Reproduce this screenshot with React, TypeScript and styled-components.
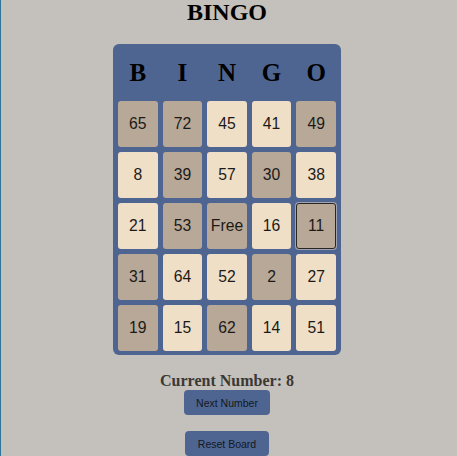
import React from "react";
import styled, { createGlobalStyle } from "styled-components";

const GlobalStyle = createGlobalStyle`
  html, body {
    margin: 0;
    padding: 0;
    background: #c4c0bb;
  }
`;

const Page = styled.div`
  box-sizing: border-box;
  width: 453px;
  min-height: 456px;
  border-left: 1px solid #2e7599;
  display: flex;
  flex-direction: column;
  align-items: center;
  overflow: hidden;
`;

const Title = styled.h1`
  margin: 0;
  font-family: "Liberation Serif", "Times New Roman", serif;
  font-weight: bold;
  font-size: 24px;
  line-height: 24px;
  color: #000;
`;

const Board = styled.div`
  margin-top: 20px;
  background: #4e6592;
  border-radius: 6px;
  padding: 5px 5px 4px;
  display: grid;
  grid-template-columns: repeat(5, 39.6px);
  grid-template-rows: 47px repeat(5, 46px);
  column-gap: 5px;
  row-gap: 5px;
`;

const Letter = styled.div`
  display: flex;
  align-items: center;
  justify-content: center;
  font-family: "Liberation Serif", "Times New Roman", serif;
  font-weight: bold;
  font-size: 25px;
  color: #000;
  padding-top: 1px;
`;

const Cell = styled.div<{ $called: boolean; $selected?: boolean }>`
  box-sizing: border-box;
  display: flex;
  align-items: center;
  justify-content: center;
  border-radius: 3px;
  background: ${(p) => (p.$called ? "#b8a897" : "#f0dfc7")};
  border: ${(p) => (p.$selected ? "1px solid #2a2622" : "none")};
  box-shadow: ${(p) => (p.$selected ? "0 0 0 1px rgba(210,205,200,0.6)" : "none")};
  font-family: "Liberation Sans", Arial, sans-serif;
  font-size: 15.7px;
  color: #1c1a18;
`;

const Current = styled.div`
  margin-top: 17px;
  font-family: "Liberation Serif", "Times New Roman", serif;
  font-weight: bold;
  font-size: 16px;
  line-height: 18px;
  color: #3a3835;
`;

const Button = styled.button<{ $gap?: number }>`
  margin-top: ${(p) => p.$gap ?? 0}px;
  height: 25px;
  padding: 0 12.5px;
  border: none;
  border-radius: 4px;
  background: #4e6592;
  font-family: "Liberation Sans", Arial, sans-serif;
  font-size: 10.5px;
  color: #141820;
  cursor: pointer;
`;

const letters = ["B", "I", "N", "G", "O"];

type Sq = { v: string; c: boolean; s?: boolean };

const rows: Sq[][] = [
  [
    { v: "65", c: true },
    { v: "72", c: true },
    { v: "45", c: false },
    { v: "41", c: false },
    { v: "49", c: true },
  ],
  [
    { v: "8", c: false },
    { v: "39", c: true },
    { v: "57", c: false },
    { v: "30", c: true },
    { v: "38", c: false },
  ],
  [
    { v: "21", c: false },
    { v: "53", c: true },
    { v: "Free", c: true },
    { v: "16", c: false },
    { v: "11", c: true, s: true },
  ],
  [
    { v: "31", c: true },
    { v: "64", c: false },
    { v: "52", c: false },
    { v: "2", c: true },
    { v: "27", c: false },
  ],
  [
    { v: "19", c: true },
    { v: "15", c: false },
    { v: "62", c: true },
    { v: "14", c: false },
    { v: "51", c: false },
  ],
];

export default function App() {
  return (
    <>
      <GlobalStyle />
      <Page>
        <Title>BINGO</Title>
        <Board>
          {letters.map((l) => (
            <Letter key={l}>{l}</Letter>
          ))}
          {rows.flat().map((sq, i) => (
            <Cell key={i} $called={sq.c} $selected={sq.s}>
              {sq.v}
            </Cell>
          ))}
        </Board>
        <Current>Current Number: 8</Current>
        <Button>Next Number</Button>
        <Button $gap={16}>Reset Board</Button>
      </Page>
    </>
  );
}
